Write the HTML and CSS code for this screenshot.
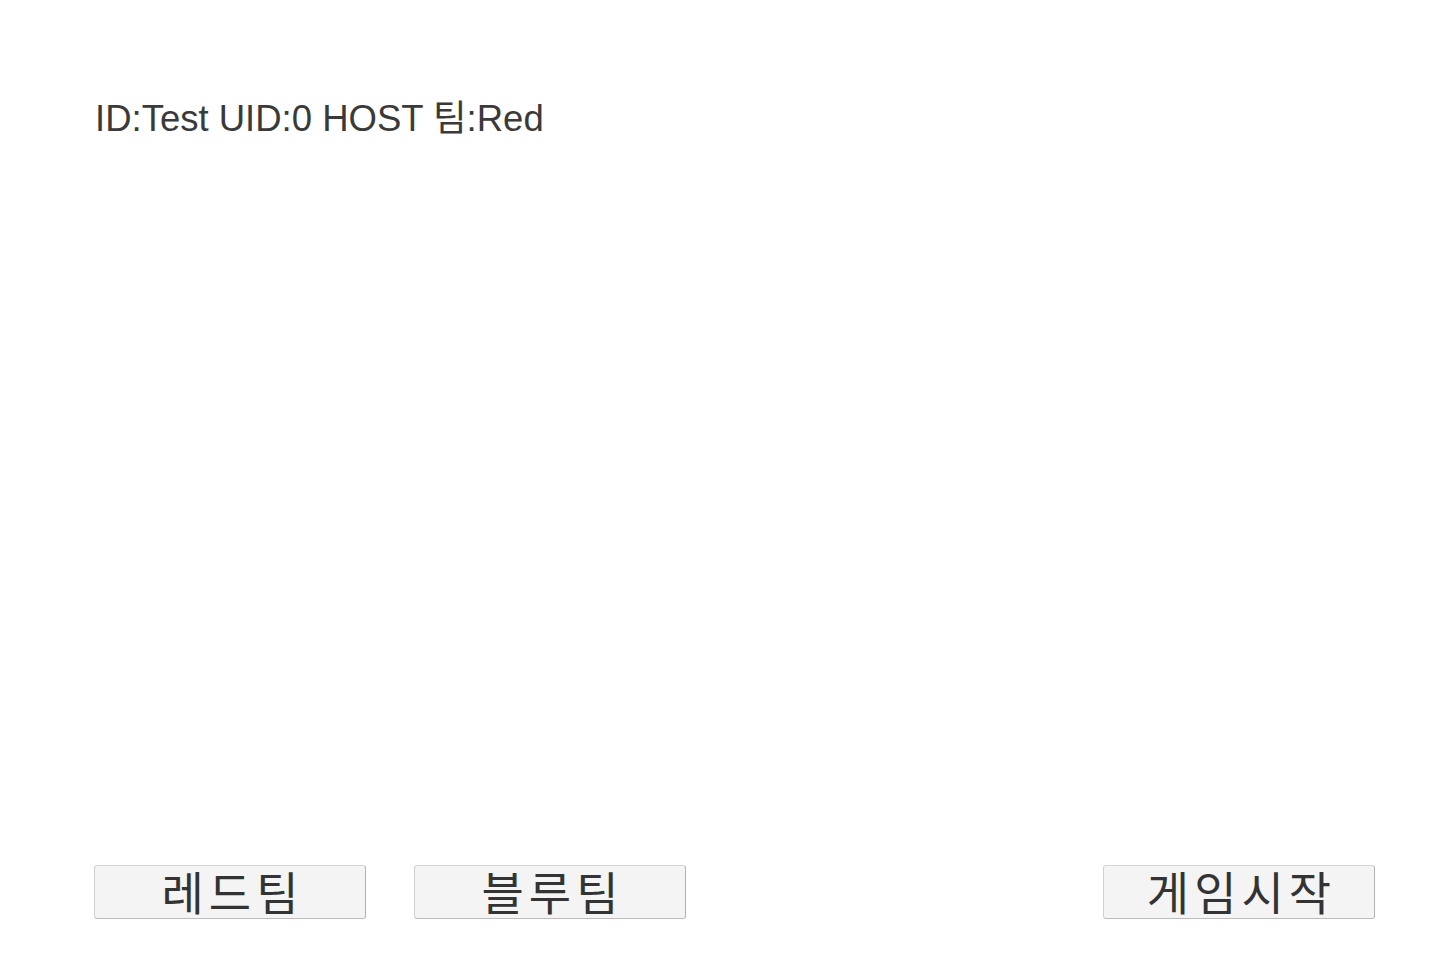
FILE: index.html
```html
<!DOCTYPE html>
<html lang="ko">
<head>
<meta charset="utf-8">
<link rel="stylesheet" href="styles.css">
</head>
<body>
<div class="screen">
  <div class="info">ID:Test UID:0 HOST 팀:Red</div>
  <div class="actions">
    <div class="team-buttons">
      <button class="btn">레드팀</button>
      <button class="btn">블루팀</button>
    </div>
    <button class="btn">게임시작</button>
  </div>
</div>
</body>
</html>
```
FILE: styles.css
```css
html, body {
  margin: 0;
  padding: 0;
  background: #ffffff;
}
.screen {
  width: 1442px;
  height: 968px;
  box-sizing: border-box;
  padding: 96px 67px 49px 94px;
  display: flex;
  flex-direction: column;
  justify-content: space-between;
}
.info {
  font-family: "Liberation Sans", "Noto Sans CJK KR", sans-serif;
  font-size: 36.5px;
  line-height: 46px;
  color: #3a3a3a;
  margin-left: 1px;
}
.actions {
  display: flex;
  justify-content: space-between;
  align-items: flex-end;
}
.team-buttons {
  display: flex;
  gap: 48px;
}
.btn {
  width: 272px;
  height: 54px;
  box-sizing: border-box;
  border: 1px solid;
  border-color: #d4d4d4 #b2b2b2 #bcbcbc #cfcfcf;
  border-radius: 3px;
  background: #f4f4f4;
  font-family: "Noto Sans CJK KR", sans-serif;
  font-weight: 400;
  font-size: 46px;
  line-height: 46px;
  letter-spacing: 5px;
  color: #333333;
  padding: 0 0 4px 5px;
  margin: 0;
}
```
